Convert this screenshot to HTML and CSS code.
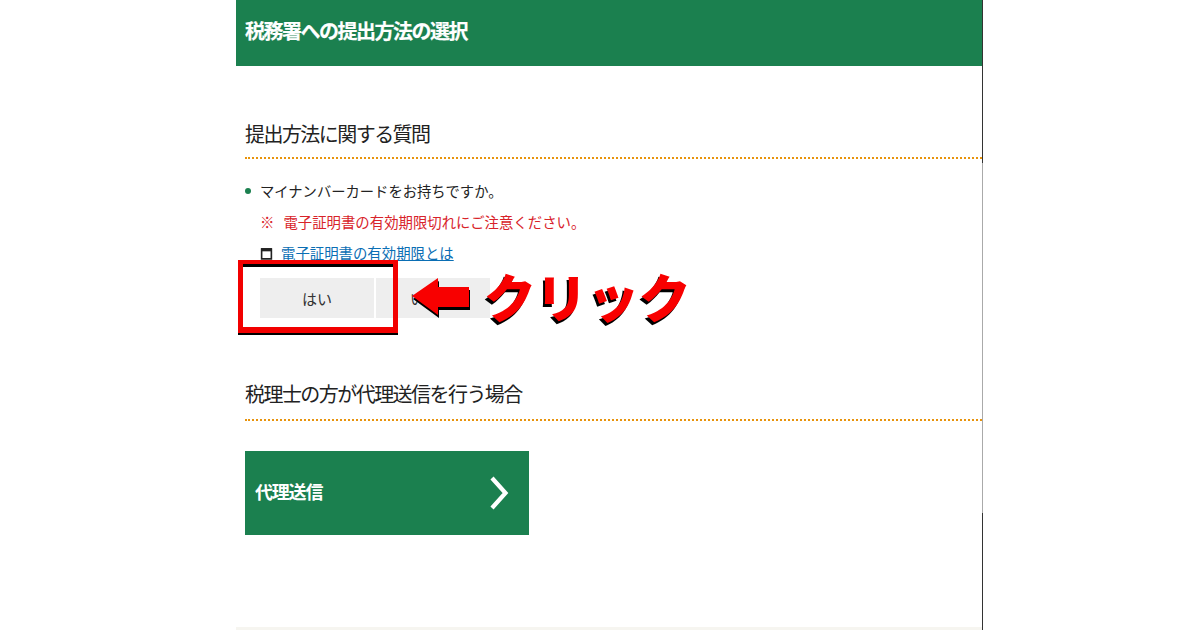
FILE: index.html
```html
<!DOCTYPE html>
<html lang="ja">
<head>
<meta charset="utf-8">
<title>税務署への提出方法の選択</title>
<link rel="stylesheet" href="styles.css">
</head>
<body>
<main class="page">
  <header class="page-header"><h1>税務署への提出方法の選択</h1></header>
  <section class="question">
    <h2 class="section-title">提出方法に関する質問</h2>
    <ul class="bullets">
      <li class="bullet">マイナンバーカードをお持ちですか。</li>
    </ul>
    <p class="notice"><span class="notice-mark">※</span>電子証明書の有効期限切れにご注意ください。</p>
    <p class="help">
      <svg class="window-icon" viewBox="0 0 12 12" aria-hidden="true"><path d="M1.500 2h9v9h-9z" fill="none" stroke="#222" stroke-width="1.500"/><path d="M1 1h10v3H1z" fill="#222"/></svg>
      <a href="#">電子証明書の有効期限とは</a>
    </p>
    <div class="answers">
      <button class="answer answer-yes">はい</button>
      <button class="answer answer-no">いいえ</button>
    </div>
  </section>
  <section class="proxy">
    <h2 class="section-title">税理士の方が代理送信を行う場合</h2>
    <a class="proxy-button" href="#">
      <span>代理送信</span>
      <svg class="chevron" viewBox="0 0 20 34" aria-hidden="true"><path d="M3 2 16.500 17 3 32" fill="none" stroke="#fff" stroke-width="4.200"/></svg>
    </a>
  </section>
  <div class="annotation">
    <div class="highlight"></div>
    <svg class="arrow" viewBox="0 0 60 44" aria-hidden="true">
      <path d="M0 18 26 0V9H57V29H26V37Z" fill="#000" transform="translate(1 3)"/>
      <path d="M0 18 26 0V9H57V29H26V37Z" fill="#f80000"/>
    </svg>
    <span class="click-label">クリック</span>
  </div>
</main>
<div class="page-foot"></div>
</body>
</html>
```
FILE: styles.css
```css
* { box-sizing: border-box; }
html, body { margin: 0; height: 630px; overflow: hidden; background: #fff; }
body {
  font-family: "Noto Sans CJK JP", "Liberation Sans", sans-serif;
  color: #222;
  position: relative;
}
.page {
  position: relative;
  width: 747px;
  height: 630px;
  margin-left: 236px;
  border-right: 1px solid #333;
  border-image: linear-gradient(#333 163px, #aaa 163px, #aaa 512px, #333 512px) 1;
}
.page-header {
  height: 66px;
  background: #1b804f;
  display: flex;
  align-items: center;
  padding-left: 9px;
}
.page-header h1 {
  margin: 0 0 4px;
  color: #fff;
  font-size: 20px;
  line-height: 28px;
  font-weight: 700;
  letter-spacing: -1.500px;
  -webkit-text-stroke: 0.2px #fff;
}
.question { padding: 53px 0 0 9px; height: 315px; }
.section-title {
  margin: 0;
  height: 40px;
  font-size: 20px;
  line-height: 30px;
  font-weight: 400;
  letter-spacing: -1.550px;
  border-bottom: 2px dotted #e8930c;
}
.bullets { list-style: none; margin: 20px 0 0; padding: 0; }
.bullet {
  position: relative;
  padding-left: 15px;
  font-size: 14.300px;
  line-height: 24px;
}
.bullet::before {
  content: "";
  position: absolute;
  left: 0;
  top: 9px;
  width: 6px;
  height: 6px;
  border-radius: 50%;
  background: #1b804f;
}
.notice {
  margin: 7px 0 0 15px;
  font-size: 14.400px;
  line-height: 24px;
  color: #d8232a;
}
.notice-mark { margin-right: 9px; }
.help {
  margin: 7px 0 0 15px;
  font-size: 14.400px;
  line-height: 24px;
  display: flex;
  align-items: center;
  gap: 8px;
}
.help a { color: #0a6eb4; }
.window-icon { width: 13px; height: 13px; margin-top: 1px; }
.answers { display: flex; gap: 2px; margin: 13px 0 0 15px; }
.answer {
  width: 114px;
  height: 40px;
  border: 0;
  padding: 0;
  background: #eee;
  color: #333;
  font: inherit;
  font-size: 15px;
}
.answer-no { font-size: 14px; padding-right: 4px; }
.proxy { padding-left: 9px; margin-top: -2px; }
.proxy .section-title { height: 42px; padding-top: 0; }
.proxy-button {
  margin-top: 30px;
  width: 284px;
  height: 84px;
  background: #1b804f;
  color: #fff;
  text-decoration: none;
  display: flex;
  align-items: center;
  justify-content: space-between;
  padding: 0 20px 0 10px;
  font-size: 18px;
  font-weight: 700;
  letter-spacing: -1.200px;
}
.proxy-button span { margin-bottom: 4px; }
.chevron { width: 20px; height: 34px; }
.annotation { position: absolute; inset: 0; pointer-events: none; }
.highlight {
  position: absolute;
  left: 2px;
  top: 260px;
  width: 160px;
  height: 73px;
  border-style: solid;
  border-color: #f20000;
  border-width: 4px 5px 6px;
  box-shadow: 0 2px 0 #000, inset 0 3px 0 #000;
}
.arrow { position: absolute; left: 176px; top: 278px; width: 60px; height: 44px; }
.click-label {
  position: absolute;
  left: 248px;
  top: 258px;
  font-size: 52px;
  line-height: 76px;
  font-weight: 900;
  letter-spacing: -0.400px;
  color: #f80000;
  text-shadow: -2px 3px 0 #000;
  white-space: nowrap;
}
.page-foot {
  position: absolute;
  left: 236px;
  top: 627px;
  width: 746px;
  height: 3px;
  background: #f6f5f0;
}
```
